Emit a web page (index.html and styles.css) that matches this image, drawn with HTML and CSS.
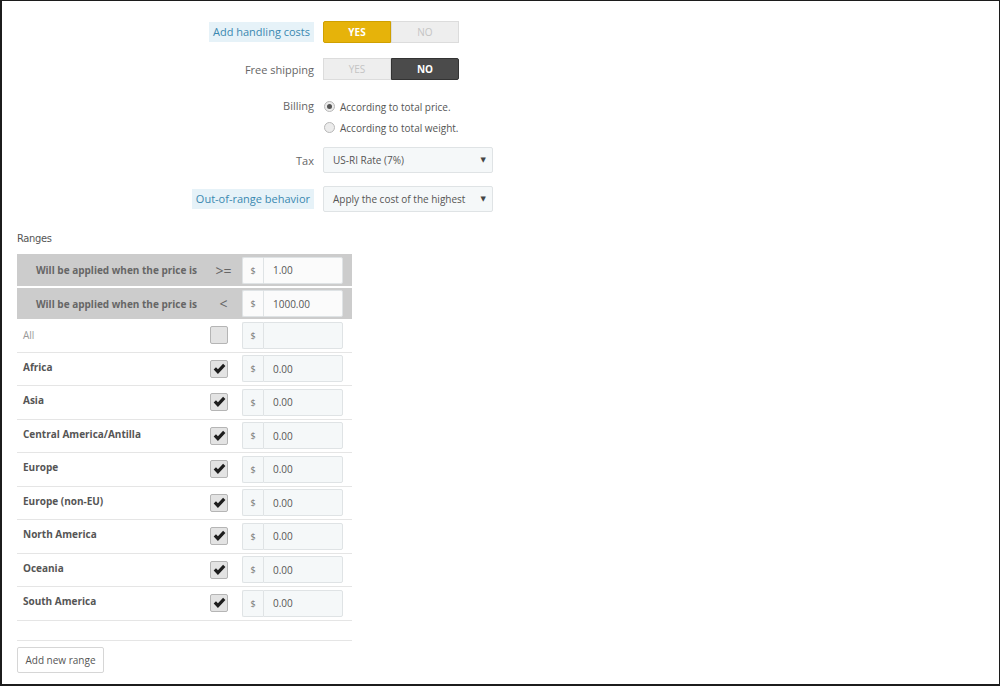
FILE: index.html
```html
<!DOCTYPE html>
<html lang="en">
<head>
    <meta charset="UTF-8">
    <title>Carrier ranges</title>
    <link rel="stylesheet" href="styles.css">
</head>
<body>
    <div class="frame">
        <div class="form">
            <div class="form-row">
                <div class="form-label"><span class="hint">Add handling costs</span></div>
                <div class="switch">
                    <span class="switch-opt on-yes">YES</span>
                    <span class="switch-opt off">NO</span>
                </div>
            </div>
            <div class="form-row row-free">
                <div class="form-label"><span>Free shipping</span></div>
                <div class="switch">
                    <span class="switch-opt off">YES</span>
                    <span class="switch-opt on-no">NO</span>
                </div>
            </div>
            <div class="form-row row-billing">
                <div class="form-label label-top"><span>Billing</span></div>
                <div class="radios">
                    <label class="radio"><span class="radio-dot checked"></span>According to total price.</label>
                    <label class="radio"><span class="radio-dot"></span>According to total weight.</label>
                </div>
            </div>
            <div class="form-row row-tax">
                <div class="form-label"><span>Tax</span></div>
                <div class="select">US-RI Rate (7%)<span class="caret">&#9660;</span></div>
            </div>
            <div class="form-row">
                <div class="form-label"><span class="hint">Out-of-range behavior</span></div>
                <div class="select">Apply the cost of the highest<span class="caret">&#9660;</span></div>
            </div>
        </div>

        <div class="ranges">
            <div class="ranges-title">Ranges</div>
            <div class="range-table">
                <div class="range-head">
                    <span class="head-text">Will be applied when the price is</span>
                    <span class="op">&gt;=</span>
                    <div class="input-group">
                        <span class="addon">$</span>
                        <span class="input">1.00</span>
                    </div>
                </div>
                <div class="range-head">
                    <span class="head-text">Will be applied when the price is</span>
                    <span class="op">&lt;</span>
                    <div class="input-group">
                        <span class="addon">$</span>
                        <span class="input">1000.00</span>
                    </div>
                </div>

                <div class="zone-row zone-all">
                    <span class="zone-name">All</span>
                    <span class="check"></span>
                    <div class="input-group">
                        <span class="addon">$</span>
                        <span class="input"></span>
                    </div>
                </div>
                <div class="zone-row">
                    <span class="zone-name">Africa</span>
                    <span class="check"><svg viewBox="0 0 18 18" width="18" height="18"><path d="M3 9.5 L5.6 7 L7.8 9.3 L13.6 3 L16.2 5.6 L7.8 14.6 Z"/></svg></span>
                    <div class="input-group"><span class="addon">$</span><span class="input">0.00</span></div>
                </div>
                <div class="zone-row">
                    <span class="zone-name">Asia</span>
                    <span class="check"><svg viewBox="0 0 18 18" width="18" height="18"><path d="M3 9.5 L5.6 7 L7.8 9.3 L13.6 3 L16.2 5.6 L7.8 14.6 Z"/></svg></span>
                    <div class="input-group"><span class="addon">$</span><span class="input">0.00</span></div>
                </div>
                <div class="zone-row">
                    <span class="zone-name">Central America/Antilla</span>
                    <span class="check"><svg viewBox="0 0 18 18" width="18" height="18"><path d="M3 9.5 L5.6 7 L7.8 9.3 L13.6 3 L16.2 5.6 L7.8 14.6 Z"/></svg></span>
                    <div class="input-group"><span class="addon">$</span><span class="input">0.00</span></div>
                </div>
                <div class="zone-row">
                    <span class="zone-name">Europe</span>
                    <span class="check"><svg viewBox="0 0 18 18" width="18" height="18"><path d="M3 9.5 L5.6 7 L7.8 9.3 L13.6 3 L16.2 5.6 L7.8 14.6 Z"/></svg></span>
                    <div class="input-group"><span class="addon">$</span><span class="input">0.00</span></div>
                </div>
                <div class="zone-row">
                    <span class="zone-name">Europe (non-EU)</span>
                    <span class="check"><svg viewBox="0 0 18 18" width="18" height="18"><path d="M3 9.5 L5.6 7 L7.8 9.3 L13.6 3 L16.2 5.6 L7.8 14.6 Z"/></svg></span>
                    <div class="input-group"><span class="addon">$</span><span class="input">0.00</span></div>
                </div>
                <div class="zone-row">
                    <span class="zone-name">North America</span>
                    <span class="check"><svg viewBox="0 0 18 18" width="18" height="18"><path d="M3 9.5 L5.6 7 L7.8 9.3 L13.6 3 L16.2 5.6 L7.8 14.6 Z"/></svg></span>
                    <div class="input-group"><span class="addon">$</span><span class="input">0.00</span></div>
                </div>
                <div class="zone-row">
                    <span class="zone-name">Oceania</span>
                    <span class="check"><svg viewBox="0 0 18 18" width="18" height="18"><path d="M3 9.5 L5.6 7 L7.8 9.3 L13.6 3 L16.2 5.6 L7.8 14.6 Z"/></svg></span>
                    <div class="input-group"><span class="addon">$</span><span class="input">0.00</span></div>
                </div>
                <div class="zone-row">
                    <span class="zone-name">South America</span>
                    <span class="check"><svg viewBox="0 0 18 18" width="18" height="18"><path d="M3 9.5 L5.6 7 L7.8 9.3 L13.6 3 L16.2 5.6 L7.8 14.6 Z"/></svg></span>
                    <div class="input-group"><span class="addon">$</span><span class="input">0.00</span></div>
                </div>
            </div>
            <div class="range-footer">
                <button class="add-button">Add new range</button>
            </div>
        </div>
    </div>
</body>
</html>
```

FILE: styles.css
```css
body {
    margin: 0;
    font-family: "Open Sans", "DejaVu Sans", sans-serif;
    color: #555555;
    background-color: #ffffff;
}

.frame {
    width: 1000px;
    height: 686px;
    box-sizing: border-box;
    border: 1px solid #1c1c1c;
    border-left-width: 2px;
    border-bottom-width: 2px;
    overflow: hidden;
}

.form {
    padding-top: 20px;
}

.form-row {
    display: grid;
    grid-template-columns: 312px auto;
    column-gap: 9px;
    align-items: center;
    margin-bottom: 15px;
}

.row-free {
    margin-bottom: 16px;
}

.row-billing {
    align-items: start;
    margin-bottom: 9px;
}

.row-tax {
    margin-bottom: 13px;
}

.form-label {
    text-align: right;
    font-size: 11px;
    color: #666666;
}

.label-top {
    line-height: 20px;
}

.hint {
    display: inline-block;
    background-color: #e6f2f8;
    color: #3a88b0;
    padding: 3px 4px;
    line-height: 14px;
}

.switch {
    display: flex;
    width: 136px;
    height: 22px;
}

.switch-opt {
    flex: 1;
    display: flex;
    align-items: center;
    justify-content: center;
    font-size: 10px;
    box-sizing: border-box;
    border: 1px solid #dcdcdc;
}

.off {
    background-color: #eeeeee;
    color: #c4c4c4;
}

.on-yes {
    background-color: #e6b30a;
    border-color: #cfa000;
    color: #ffffff;
    font-weight: bold;
    border-radius: 2px 0 0 2px;
}

.on-no {
    background-color: #4b4b4b;
    border-color: #333333;
    color: #ffffff;
    font-weight: bold;
    border-radius: 0 2px 2px 0;
}

.radios {
    display: flex;
    flex-direction: column;
}

.radio {
    display: flex;
    align-items: center;
    height: 21px;
    font-size: 10px;
    color: #555555;
    padding-left: 1px;
}

.radio-dot {
    width: 9px;
    height: 9px;
    border: 1px solid #b8b8b8;
    border-radius: 50%;
    background-color: #ececec;
    margin-right: 5px;
    display: flex;
    align-items: center;
    justify-content: center;
}

.radio-dot.checked::after {
    content: "";
    width: 5px;
    height: 5px;
    border-radius: 50%;
    background-color: #555555;
}

.select {
    position: relative;
    width: 170px;
    height: 26px;
    box-sizing: border-box;
    border: 1px solid #dfe3e5;
    border-radius: 2px;
    background-color: #f5f8f9;
    font-size: 10px;
    color: #555555;
    line-height: 24px;
    padding-left: 9px;
}

.caret {
    position: absolute;
    right: 6px;
    top: 0;
    font-size: 7px;
    color: #444444;
}

.ranges {
    padding-left: 15px;
    margin-top: 20px;
}

.ranges-title {
    font-family: "DejaVu Sans", sans-serif;
    font-stretch: condensed;
    font-size: 11px;
    color: #555555;
    line-height: 14px;
    margin-bottom: 8px;
    letter-spacing: -0.3px;
}

.range-table {
    width: 335px;
}

.range-head {
    display: flex;
    align-items: center;
    height: 32px;
    background-color: #cccccc;
    margin-bottom: 2px;
}

.range-head + .range-head {
    height: 31px;
    margin-bottom: 0;
}

.head-text {
    width: 188px;
    text-align: right;
    font-size: 10px;
    font-weight: bold;
    color: #666666;
    box-sizing: border-box;
    padding-right: 8px;
}

.op {
    width: 37px;
    text-align: center;
    font-size: 14px;
    color: #666666;
}

.input-group {
    display: flex;
    height: 27px;
}

.addon {
    width: 21px;
    box-sizing: border-box;
    border: 1px solid #dfe3e5;
    border-right: none;
    background-color: #f5f8f9;
    font-size: 9px;
    color: #777777;
    display: flex;
    align-items: center;
    justify-content: center;
    border-radius: 2px 0 0 2px;
}

.input {
    width: 80px;
    box-sizing: border-box;
    border: 1px solid #dfe3e5;
    background-color: #f5f8f9;
    font-size: 10px;
    color: #555555;
    display: flex;
    align-items: center;
    padding-left: 9px;
    border-radius: 0 2px 2px 0;
}

.range-head .input,
.range-head .addon {
    background-color: #fbfbfb;
}

.zone-row {
    display: flex;
    align-items: center;
    height: 33.5px;
    box-sizing: border-box;
    border-bottom: 1px solid #e5e5e5;
}

.zone-name {
    width: 193px;
    box-sizing: border-box;
    padding-left: 6px;
    padding-bottom: 4px;
    font-size: 10px;
    font-weight: bold;
    color: #555555;
}

.zone-all .zone-name {
    font-weight: normal;
    color: #999999;
    padding-bottom: 0;
}

.check {
    width: 18px;
    height: 18px;
    box-sizing: border-box;
    border: 1px solid #b5b5b5;
    border-radius: 2px;
    background-color: #e3e3e3;
    margin-right: 14px;
    display: flex;
    align-items: center;
    justify-content: center;
}

.check svg {
    fill: #1e1e1e;
    width: 16px;
    height: 16px;
}

.range-footer {
    width: 335px;
    margin-top: 19px;
    border-top: 1px solid #e5e5e5;
    padding-top: 6px;
}

.add-button {
    font-family: "Open Sans", "DejaVu Sans", sans-serif;
    font-size: 10px;
    color: #555555;
    background-color: #ffffff;
    border: 1px solid #d6d6d6;
    border-radius: 2px;
    height: 26px;
    width: 87px;
    padding: 0;
}
```
